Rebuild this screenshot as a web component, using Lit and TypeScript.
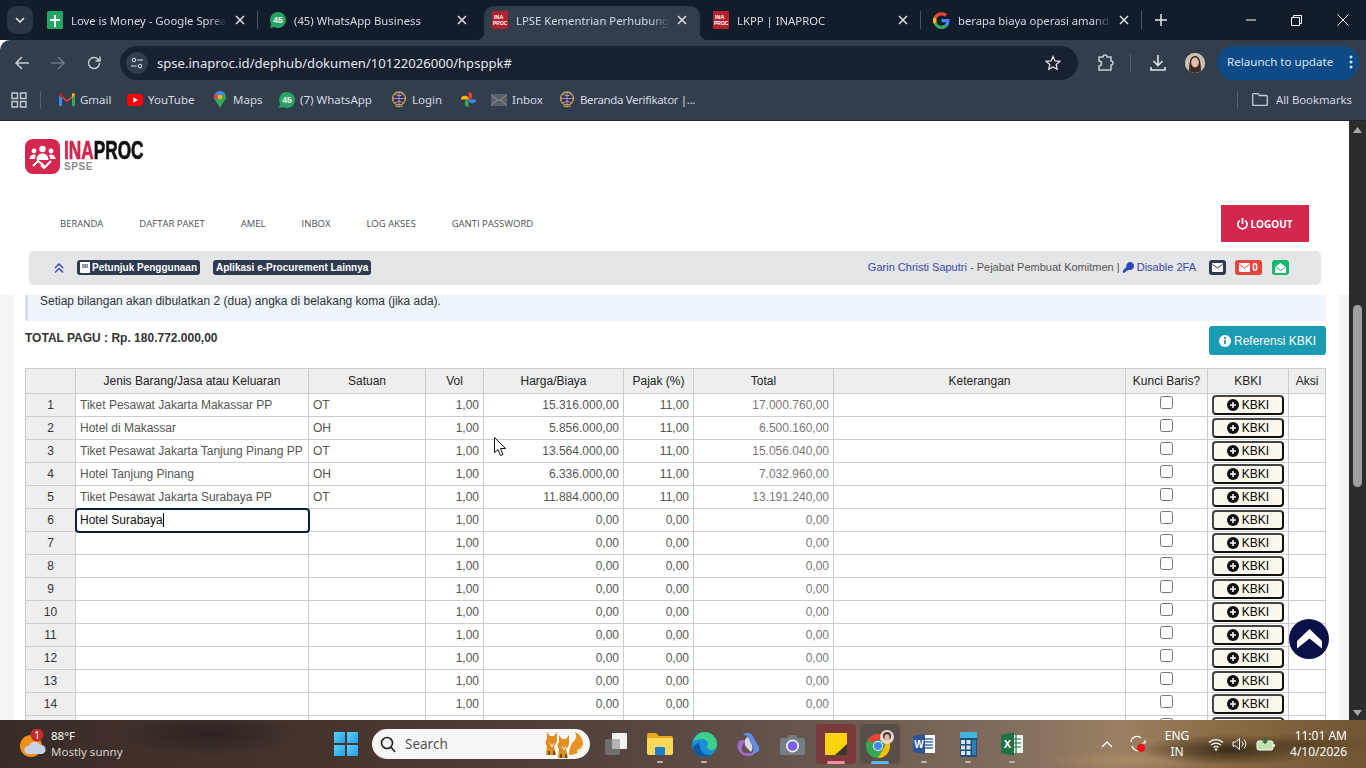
import { LitElement, html, css, svg } from 'lit';
import { customElement } from 'lit/decorators.js';
import { classMap } from 'lit/directives/class-map.js';

const sheetsIcon = html`<svg width="16" height="18" viewBox="0 0 16 18"><rect width="16" height="18" rx="1.500" fill="#23a566"/><path d="M7 4h2v4h4v2H9v6H7v-6H3V8h4z" fill="#fff"/></svg>`;
const waIcon = (label: string) => html`<svg width="16" height="16" viewBox="0 0 16 16"><path d="M8 0a8 8 0 0 1 0 16c-1.400 0-2.700-.4-3.800-1L0 16l1.100-4A8 8 0 0 1 8 0z" fill="#25a55f"/><text x="8" y="11" text-anchor="middle" font-size="8.500" font-weight="700" font-family="Liberation Sans" fill="#fff">${label}</text></svg>`;
const procIcon = html`<svg width="16" height="18" viewBox="0 0 16 18"><rect width="16" height="18" rx="1" fill="#b3202e"/><text x="2" y="8" font-size="5.500" font-weight="700" font-family="Liberation Sans" fill="#fff">INA</text><text x="1" y="14" font-size="5" font-weight="700" font-family="Liberation Sans" fill="#fff">PROC</text></svg>`;
const googleIcon = html`<svg width="17" height="17" viewBox="0 0 48 48"><path fill="#ea4335" d="M24 10c3.500 0 6.700 1.300 9.100 3.500l6.800-6.800A24 24 0 0 0 2.600 13.200l7.900 6.100C12.400 13.800 17.700 10 24 10z"/><path fill="#4285f4" d="M46.500 24.500c0-1.600-.1-3.100-.4-4.500H24v9h12.700c-.6 2.900-2.200 5.400-4.700 7l7.700 6c4.400-4.200 6.800-10.300 6.800-17.500z"/><path fill="#fbbc05" d="M10.500 28.700A14.500 14.500 0 0 1 10.500 19.300l-7.900-6.100a24 24 0 0 0 0 21.600z"/><path fill="#34a853" d="M24 48c6.500 0 11.900-2.100 15.700-5.800L32 36.200c-2.100 1.400-4.800 2.300-8 2.300-6.300 0-11.600-3.800-13.500-9.800l-7.900 6.100A24 24 0 0 0 24 48z"/></svg>`;
const closeX = html`<svg width="10" height="10" viewBox="0 0 10 10"><path d="M1 1l8 8M9 1l-8 8" stroke="#dfe3e8" stroke-width="1.500"/></svg>`;

const gmailIcon = html`<svg width="16" height="13" viewBox="0 0 16 13"><path d="M0 2v10a1 1 0 0 0 1 1h2V5z" fill="#4285f4"/><path d="M16 2v10a1 1 0 0 1-1 1h-2V5z" fill="#34a853"/><path d="M3 5v8h0L3 3 8 7l5-4v2L8 9z" fill="#ea4335"/><path d="M0 2c0-1.500 1.800-2.400 3-1.500V5z" fill="#c5221f"/><path d="M16 2c0-1.500-1.800-2.400-3-1.500V5z" fill="#fbbc05"/></svg>`;
const ytIcon = html`<svg width="16" height="12" viewBox="0 0 16 12"><rect width="16" height="12" rx="3" fill="#f00"/><path d="M6.300 3.300v5.400L11 6z" fill="#fff"/></svg>`;
const mapsIcon = html`<svg width="12" height="17" viewBox="0 0 12 17"><path d="M6 0a6 6 0 0 1 6 6c0 3-3.500 6-6 11-2.500-5-6-8-6-11a6 6 0 0 1 6-6z" fill="#34a853"/><path d="M6 0a6 6 0 0 1 5 2.700L2 9.500C.8 8.200 0 7 0 6a6 6 0 0 1 6-6z" fill="#4285f4"/><path d="M1.200 2.400 4.500 5 2 9C.8 8 0 7 0 6c0-1.400.4-2.600 1.200-3.600z" fill="#ea4335"/><circle cx="6" cy="6" r="2.200" fill="#fbbc05"/></svg>`;
const globeIcon = html`<svg width="16" height="17" viewBox="0 0 16 17"><circle cx="8" cy="7.500" r="6.500" fill="#3d3150" stroke="#c9a94b" stroke-width="1.300"/><path d="M2 7.500h12M8 1v13M4 3c2.500 2 5.500 2 8 0M4 12c2.500-2 5.500-2 8 0" stroke="#b9a6d8" stroke-width=".8" fill="none"/><path d="M4 14.500c2 1.800 6 1.800 8 0" stroke="#c9a94b" fill="none"/></svg>`;
const photosIcon = html`<svg width="15" height="15" viewBox="0 0 16 16"><path d="M8 8V0a4 4 0 0 1 0 8z" fill="#ea4335"/><path d="M8 8h8a4 4 0 0 1-8 0z" fill="#4285f4"/><path d="M8 8v8a4 4 0 0 1 0-8z" fill="#34a853"/><path d="M8 8H0a4 4 0 0 1 8 0z" fill="#fbbc05"/></svg>`;
const inboxIcon = html`<svg width="16" height="12" viewBox="0 0 16 12"><rect width="16" height="12" rx="1" fill="#5b6168"/><path d="M0 1l8 6 8-6M0 12l6-6M16 12l-6-6" stroke="#8a9097" fill="none"/></svg>`;

const bookmarks = [
  { label: 'Gmail', icon: gmailIcon, w: 68 },
  { label: 'YouTube', icon: ytIcon, w: 85 },
  { label: 'Maps', icon: mapsIcon, w: 67 },
  { label: '(7) WhatsApp', icon: waIcon('45'), w: 112 },
  { label: 'Login', icon: globeIcon, w: 69 },
  { label: '', icon: photosIcon, w: 31 },
  { label: 'Inbox', icon: inboxIcon, w: 68 },
  { label: 'Beranda Verifikator |...', icon: globeIcon, w: 150, tight: true },
];

const tabs = [
  { title: 'Love is Money - Google Spreadsheets', icon: sheetsIcon, w: 223, sep: true },
  { title: '(45) WhatsApp Business', icon: waIcon('45'), w: 222 },
  { title: 'LPSE Kementrian Perhubungan', icon: procIcon, w: 216, active: true },
  { title: 'LKPP | INAPROC', icon: procIcon, w: 225, inset: true, sep: true },
  { title: 'berapa biaya operasi amandel', icon: googleIcon, w: 221, sep: true },
];

const navLinks = ['Beranda', 'Daftar Paket', 'Amel', 'Inbox', 'Log Akses', 'Ganti Password'];

const filled = [
  ['Tiket Pesawat Jakarta Makassar PP', 'OT', '15.316.000,00', '11,00', '17.000.760,00'],
  ['Hotel di Makassar', 'OH', '5.856.000,00', '11,00', '6.500.160,00'],
  ['Tiket Pesawat Jakarta Tanjung Pinang PP', 'OT', '13.564.000,00', '11,00', '15.056.040,00'],
  ['Hotel Tanjung Pinang', 'OH', '6.336.000,00', '11,00', '7.032.960,00'],
  ['Tiket Pesawat Jakarta Surabaya PP', 'OT', '11.884.000,00', '11,00', '13.191.240,00'],
];

const columns = [50, 233, 117, 58, 140, 70, 140, 292, 82, 81, 37];
const headers = ['', 'Jenis Barang/Jasa atau Keluaran', 'Satuan', 'Vol', 'Harga/Biaya', 'Pajak (%)', 'Total', 'Keterangan', 'Kunci Baris?', 'KBKI', 'Aksi'];

const envelope = (fill: string, flap: string) => html`<svg width="11" height="9" viewBox="0 0 11 9"><rect width="11" height="9" rx="1" fill="${fill}"/><path d="M.5 1.500l5 3.500 5-3.500" stroke="${flap}" fill="none"/></svg>`;

const taskIcons = [
  { key: 'view', icon: html`<svg width="22" height="24" viewBox="0 0 22 24"><rect x="0" y="7" width="15" height="16" rx="2" fill="#6f6f6f"/><rect x="7" y="1" width="15" height="16" rx="1" fill="#f2f2f2"/><rect x="7" y="7" width="8" height="10" fill="#b4b4b4"/></svg>` },
  { key: 'files', dot: true, icon: html`<svg width="26" height="24" viewBox="0 0 26 24"><path d="M0 3a2 2 0 0 1 2-2h7l3 3h12a2 2 0 0 1 2 2v2H0z" fill="#e8a91c"/><rect y="6" width="26" height="17" rx="2" fill="#fdd75a"/><rect x="8" y="15" width="10" height="8" rx="1" fill="#1a7fd0"/></svg>` },
  { key: 'edge', dot: true, icon: html`<svg width="25" height="25" viewBox="0 0 25 25"><circle cx="12.500" cy="12.500" r="12.500" fill="#1b8fd8"/><path d="M1 10C3 3 8 0 13 0c6 0 12 5 12 12 0 4-3 6-6 6-2 0-4-1-4-3 0-1 1-2 1-3 0-3-3-5-6-5-4 0-8 2-9 3z" fill="#3bd18a"/><path d="M8 14c0 5 4 9 9 9 1 0 2 0 3-1-2 2-5 3-8 3-6 0-10-4-11-9 1-3 4-5 7-5-1 1-1 2 0 3z" fill="#0c5aa6"/></svg>` },
  { key: 'copilot', icon: html`<svg width="23" height="25" viewBox="0 0 23 25"><path d="M6 3c2-3 7-3 9 0l7 12c1 3-1 6-4 6h-3c2-3 2-6 0-9L11 5C9 3 7 3 6 3z" fill="#5f8fe8"/><path d="M2 9C0 12 0 16 2 19c2 4 6 5 10 5 3 0 5-1 6-3H9c-3 0-5-3-4-6l3-7c-3 0-5 0-6 1z" fill="#a06cd0"/><path d="M8 8c-1 3 0 6 2 8l4 4c2-3 2-6 0-9L11 5C10 5 9 6 8 8z" fill="#d8d8ec"/></svg>` },
  { key: 'camera', icon: html`<svg width="25" height="21" viewBox="0 0 25 21"><path d="M2 4h5l2-3h7l2 3h5a2 2 0 0 1 2 2v13a2 2 0 0 1-2 2H2a2 2 0 0 1-2-2V6a2 2 0 0 1 2-2z" fill="#757d85"/><circle cx="12.500" cy="12" r="6.500" fill="#eef0f4"/><circle cx="12.500" cy="12" r="4.800" fill="#7a5fe0"/></svg>` },
  { key: 'sticky', cls: 'sticky', icon: html`<svg width="22" height="22" viewBox="0 0 22 22"><path d="M0 0h22v13l-9 9H0z" fill="#fbd40c"/><path d="M22 11v11H10z" fill="#3a3a2e"/></svg>` },
  { key: 'chrome', cls: 'chrome', icon: html`<svg width="28" height="28" viewBox="0 0 28 28"><circle cx="12" cy="16" r="12" fill="#34a853"/><path d="M12 4a12 12 0 0 1 10.400 6H12a6 6 0 0 0-5.200 3L1.600 10A12 12 0 0 1 12 4z" fill="#ea4335"/><path d="M22.400 10A12 12 0 0 1 12 28l5.200-9a6 6 0 0 0 0-9z" fill="#fbbc05"/><circle cx="12" cy="16" r="5" fill="#fff"/><circle cx="12" cy="16" r="4" fill="#4285f4"/><circle cx="21" cy="7" r="7" fill="#e8d9cf"/><circle cx="21" cy="6" r="4" fill="#4a3530"/><ellipse cx="21" cy="7.500" rx="2.500" ry="3.200" fill="#e3b9a3"/></svg>` },
  { key: 'word', dot: true, icon: html`<svg width="22" height="20" viewBox="0 0 22 20"><rect x="7" y="1" width="15" height="18" fill="#fff"/><path d="M10 5h10M10 8h10M10 11h10M10 14h10" stroke="#3a6fb8" stroke-width="1.400"/><path d="M0 2l12-2v20L0 18z" fill="#2a5699"/><text x="6" y="13.500" font-size="10" font-weight="700" text-anchor="middle" font-family="Liberation Sans" fill="#fff">W</text></svg>` },
  { key: 'calc', dot: true, icon: html`<svg width="17" height="25" viewBox="0 0 17 25"><rect width="17" height="25" fill="#1d4f7c"/><rect width="17" height="6" fill="#41b3e0"/><path d="M1 8h4v4H1zM6.500 8h4v4h-4zM1 13.500h4v4H1zM6.500 13.500h4v4h-4zM1 19h4v4H1zM6.500 19h4v4h-4z" fill="#d9e4ea"/><path d="M12 8h4v15h-4z" fill="#2f7fb5"/></svg>` },
  { key: 'excel', dot: true, icon: html`<svg width="22" height="24" viewBox="0 0 22 24"><rect x="8" y="3" width="14" height="18" fill="#eaf3ec"/><path d="M11 7h9M11 11h9M11 15h9M15 3v18" stroke="#207245" stroke-width="1.200"/><path d="M0 3l13-3v24L0 21z" fill="#207245"/><text x="6.500" y="16" font-size="11" font-weight="700" text-anchor="middle" font-family="Liberation Sans" fill="#fff">X</text></svg>` },
];

const foxBody = svg`<path d="M6 2l3 4h4l3-4v8c0 3-2 5-3 6l2 9H5l1-9C4 14 4 11 6 9z" fill="#e08d22"/><path d="M8 12l3 3 3-3-3 6z" fill="#f9e8c8"/><path d="M7 25h2v-4H7zM12 25h2v-4h-2z" fill="#6b4a1c"/>`;

@customElement('app-root')
export class AppRoot extends LitElement {
  static styles = css`
    :host {
      display: flex;
      flex-direction: column;
      width: 1366px;
      height: 768px;
      overflow: hidden;
      position: relative;
      font-family: 'Liberation Sans', Arial, sans-serif;
      font-size: 12px;
      color: #333;
    }

    svg { display: block; flex: none; }

    /* browser chrome */
    .tabstrip {
      height: 40px;
      flex: none;
      background: #131c2a;
      display: flex;
      align-items: flex-start;
      padding-left: 7px;
      font-family: 'Noto Sans', sans-serif;
      color: #d5dae1;
    }
    .tab-menu {
      width: 26px;
      height: 28px;
      margin-top: 6px;
      margin-right: 6px;
      border-radius: 9px;
      background: #2b3544;
      display: flex;
      align-items: center;
      justify-content: center;
      flex: none;
    }
    .tab {
      height: 34px;
      margin-top: 6px;
      box-sizing: border-box;
      padding: 0 17px 6px 8px;
      display: flex;
      align-items: center;
      gap: 8px;
      flex: none;
      position: relative;
    }
    .tab.inset { padding-left: 13px; }
    .tab.active { background: #333e4d; border-radius: 10px 10px 0 0; padding-right: 13px; }
    .tab.active::before, .tab.active::after {
      content: '';
      position: absolute;
      bottom: 0;
      width: 8px;
      height: 8px;
    }
    .tab.active::before { left: -8px; background: radial-gradient(circle at 0 0, transparent 8px, #333e4d 8.500px); }
    .tab.active::after { right: -8px; background: radial-gradient(circle at 100% 0, transparent 8px, #333e4d 8.500px); }
    .tab-title {
      flex: 1;
      min-width: 0;
      white-space: nowrap;
      overflow: hidden;
      font-size: 11.300px;
      -webkit-mask-image: linear-gradient(to right, #000 88%, transparent);
      mask-image: linear-gradient(to right, #000 88%, transparent);
    }
    .tab-sep { width: 1px; height: 18px; margin: 11px 4px 0 -5px; background: #4a5462; flex: none; }
    .new-tab { margin: 14px 0 0 9px; flex: none; }
    .window-ctl { margin-left: auto; display: flex; align-items: center; height: 40px; padding-right: 17px; gap: 35px; }

    .toolbar {
      height: 45px;
      flex: none;
      background: #333e4d;
      display: flex;
      align-items: center;
      padding-left: 14px;
      border-radius: 10px 0 0 0;
      color: #d5dae1;
    }
    .tool { width: 16px; margin-right: 20px; flex: none; }
    .tool.last { margin-right: 18px; }
    .omnibox {
      width: 958px;
      height: 34px;
      border-radius: 17px;
      background: #172130;
      display: flex;
      align-items: center;
      padding: 0 17px 0 6px;
      box-sizing: border-box;
      flex: none;
    }
    .site-btn {
      width: 22px;
      height: 22px;
      border-radius: 50%;
      background: #333e4d;
      display: flex;
      align-items: center;
      justify-content: center;
      margin-right: 9px;
      flex: none;
    }
    .url { font-family: 'Noto Sans', sans-serif; font-size: 13.100px; flex: 1; color: #e3e7ec; }
    .toolbar-right { display: flex; align-items: center; margin-left: 18px; }
    .tb-divider { width: 1px; height: 18px; background: #56606d; margin: 0 19px 0 16px; }
    .avatar {
      width: 20px;
      height: 20px;
      border-radius: 50%;
      background: #c9b9ab;
      margin: 0 12px 0 19px;
      overflow: hidden;
    }
    .relaunch {
      width: 142px;
      height: 34px;
      border-radius: 17px;
      background: #0e4a86;
      color: #d6e6f7;
      font-family: 'Noto Sans', sans-serif;
      font-size: 11.600px;
      white-space: nowrap;
      display: flex;
      align-items: center;
      padding: 0 0 2px 10px;
      box-sizing: border-box;
      justify-content: space-between;
    }
    .relaunch svg { margin-right: 1px; }

    .bookmarks {
      height: 36px;
      flex: none;
      background: #333e4d;
      display: flex;
      align-items: center;
      padding: 0 0 6px 11px;
      font-family: 'Noto Sans', sans-serif;
      font-size: 11.500px;
      color: #d5dae1;
      border-bottom: 1px solid #1e2632;
      box-sizing: border-box;
    }
    .bm-divider { width: 1px; height: 18px; background: #56606d; margin: 0 9px 0 13px; flex: none; }
    .bm { display: flex; align-items: center; gap: 5px; flex: none; box-sizing: border-box; padding-left: 9px; white-space: nowrap; }
    .bm.tight { letter-spacing: -.35px; }
    .bm-icon { width: 16px; display: flex; justify-content: center; flex: none; }
    .all-bm { margin-left: auto; display: flex; align-items: center; gap: 8px; padding-right: 14px; border-left: 1px solid #56606d; padding-left: 14px; height: 18px; font-size: 11.300px; }

    /* page */
    .page { flex: 1; min-height: 0; display: flex; background: #fff; }
    .main { flex: 1; min-width: 0; display: flex; flex-direction: column; }
    .scrollbar {
      width: 17px;
      flex: none;
      background: #2c2c2c;
      display: flex;
      flex-direction: column;
      align-items: center;
      padding-top: 6px;
      box-sizing: border-box;
    }
    .thumb { width: 9px; height: 182px; border-radius: 5px; background: #9f9f9f; margin-top: 172px; }
    .scroll-arrow { flex: none; }
    .scroll-arrow.down { margin-top: auto; margin-bottom: 4px; }

    header { flex: none; height: 174px; background: #fff; display: flex; flex-direction: column; }
    .logo-row { height: 84px; box-sizing: border-box; padding: 18px 0 0 25px; display: flex; gap: 4px; align-items: flex-start; }
    .logo-text { line-height: 1; padding-top: 2px; }
    .logo-name {
      font-weight: 700;
      font-size: 25px;
      line-height: 19px;
      color: #111;
      white-space: nowrap;
      transform: scaleX(.69);
      transform-origin: left center;
      -webkit-text-stroke: .7px currentColor;
    }
    .logo-name span { color: #d3274f; }
    .logo-sub { font-weight: 700; font-size: 10px; color: #8c8c8c; line-height: 9px; letter-spacing: .6px; margin-top: 2px; }
    .nav-row { height: 37px; display: flex; align-items: center; padding: 0 40px 0 60px; gap: 36px; }
    .nav-link { font-family: 'Open Sans', sans-serif; font-size: 9.500px; text-transform: uppercase; color: #4b4f56; padding-bottom: 1px; }
    .logout {
      margin-left: auto;
      width: 88px;
      height: 37px;
      background: #d3274f;
      color: #fff;
      display: flex;
      align-items: center;
      justify-content: center;
      gap: 2px;
      font-family: 'Open Sans', sans-serif;
      font-weight: 700;
      font-size: 10px;
    }
    .infobar {
      height: 34px;
      margin: 9px 28px 10px 29px;
      background: #e4e5e6;
      border-radius: 5px;
      display: flex;
      align-items: center;
      padding: 0 32px 1px 25px;
      box-sizing: border-box;
      font-size: 11px;
    }
    .label {
      background: #2f3a50;
      color: #fff;
      font-weight: 700;
      font-size: 10px;
      height: 15px;
      border-radius: 3px;
      display: flex;
      align-items: center;
      gap: 2px;
      padding: 0 3px;
      margin-right: 13px;
      white-space: nowrap;
    }
    .chevrons { margin-right: 13px; }
    .user { margin-left: auto; color: #555; display: flex; align-items: center; white-space: pre; line-height: 13px; }
    .user b { font-weight: 400; color: #3949ab; }
    .mini { height: 15px; border-radius: 3px; display: flex; align-items: center; justify-content: center; gap: 2px; color: #fff; font-weight: 700; font-size: 10px; }
    .mini.dark { background: #2f3a50; width: 17px; margin-left: 13px; }
    .mini.red { background: #e5453c; width: 27px; margin-left: 9px; }
    .mini.green { background: #12b76a; width: 17px; margin-left: 10px; }

    .content { flex: 1; min-height: 0; background: #f4f4f4; padding: 0 10px 0 14px; overflow: hidden; }
    .card { background: #fff; padding: 0 13px 0 11px; height: 100%; }
    .alert {
      height: 26px;
      box-sizing: border-box;
      background: #eef4fb;
      border-left: 3px solid #cfdeec;
      border-radius: 0 0 0 3px;
      padding-left: 12px;
      line-height: 13px;
    }
    .total-row { display: flex; justify-content: space-between; align-items: flex-start; margin: 5px 0 13px; }
    .total { font-weight: 700; color: #333; padding-top: 5px; }
    .ref-btn {
      height: 29px;
      width: 117px;
      box-sizing: border-box;
      background: #1a9bb2;
      color: #fff;
      border-radius: 3px;
      display: flex;
      align-items: center;
      justify-content: center;
      gap: 3px;
    }

    table { border-collapse: collapse; table-layout: fixed; width: 1300px; color: #555; }
    th, td { border: 1px solid #ccc; padding: 0 4px; height: 23px; box-sizing: border-box; white-space: nowrap; overflow: hidden; }
    th { height: 25px; background: #eee; font-weight: 400; color: #222; text-align: center; }
    td.idx { background: #eee; text-align: center; color: #333; }
    td.num { text-align: right; }
    td.muted { color: #777; }
    td.center { text-align: center; padding: 0; }
    td.editing {
      outline: 2px solid #0d2238;
      outline-offset: -1px;
      border-radius: 3px;
      color: #111;
      position: relative;
    }
    .caret { border-right: 1px solid #000; }
    input[type='checkbox'] { margin: 0 0 6px; width: 13px; height: 13px; vertical-align: middle; }
    .kbki {
      height: 20px;
      width: 72px;
      margin-left: 4px;
      box-sizing: border-box;
      border: 2px solid #111;
      border-top-color: #444;
      border-left-color: #444;
      border-radius: 4px;
      background: #fdf8ee;
      color: #000;
      display: flex;
      align-items: center;
      justify-content: center;
      gap: 3px;
    }

    .to-top {
      position: absolute;
      left: 1289px;
      top: 619px;
      width: 40px;
      height: 40px;
      border-radius: 50%;
      background: #0c1049;
      display: flex;
      align-items: center;
      justify-content: center;
    }
    .cursor { position: absolute; left: 494px; top: 437px; }

    /* taskbar */
    .taskbar {
      height: 48px;
      flex: none;
      display: flex;
      align-items: center;
      color: #fff;
      font-family: 'Noto Sans', sans-serif;
      background:
        radial-gradient(ellipse 90px 22px at 210px 14px, #2c2321, transparent),
        radial-gradient(ellipse 90px 16px at 1230px 30px, #3a2c18, transparent),
        radial-gradient(ellipse 60px 12px at 1310px 24px, #5b4423, transparent),
        radial-gradient(ellipse 80px 10px at 1130px 40px, #a88a62, transparent),
        linear-gradient(to right, #3a2c27 0%, #46352e 25%, #55443d 45%, #6b5a50 62%, #7d6a5c 72%, #9a8063 82%, #8a6a42 90%, #6e5634 100%);
    }
    .weather { width: 334px; flex: none; display: flex; align-items: center; gap: 5px; padding-left: 20px; box-sizing: border-box; font-size: 11.500px; line-height: 16px; }
    .weather-sub { color: #d8d4d0; }
    .win { flex: none; display: grid; grid-template-columns: 11px 11px; gap: 2px; }
    .win i { height: 11px; background: linear-gradient(135deg, #5fd0fb, #1f9fe8); display: block; }
    .search {
      width: 218px;
      height: 30px;
      margin: 0 4px 0 14px;
      border-radius: 15px;
      background: #f6f6f6;
      display: flex;
      align-items: center;
      gap: 9px;
      padding: 0 5px 0 8px;
      box-sizing: border-box;
      color: #555;
      font-size: 13.500px;
      flex: none;
    }
    .search span { flex: 1; }
    .task-icon {
      width: 44px;
      height: 40px;
      box-sizing: border-box;
      display: flex;
      align-items: center;
      justify-content: center;
      flex: none;
      position: relative;
    }
    .task-icon.dot::after { content: ''; position: absolute; bottom: 1px; width: 6px; height: 2px; background: #b9b4b0; border-radius: 1px; }
    .task-icon.sticky { background: #7a3a3c; border-radius: 4px; margin: 0 2px; width: 40px; }
    .task-icon.chrome { background: #5a4e4a; border-radius: 4px; margin: 0 2px; width: 40px; }
    .task-icon.sticky::after, .task-icon.chrome::after { content: ''; position: absolute; bottom: 0; width: 18px; height: 3px; border-radius: 2px; }
    .task-icon.sticky::after { background: #f58ea0; }
    .task-icon.chrome::after { background: #5cb8f0; }
    .tray { margin-left: auto; display: flex; align-items: center; padding-right: 19px; font-size: 12px; }
    .tray-sync { margin-left: 17px; }
    .tray-gap { margin-left: 8px; }
    .lang { width: 30px; text-align: center; line-height: 16px; margin: 0 16px; }
    .clock { text-align: right; line-height: 16px; margin-left: 14px; }
  `;

  private renderTabs() {
    return tabs.map(t => html`
      <div
        class=${classMap({ tab: true, active: !!t.active, inset: !!t.inset })}
        style="width:${t.w}px"
      >
        ${t.icon}
        <div class="tab-title">${t.title}</div>
        ${closeX}
      </div>
      ${t.sep ? html`<div class="tab-sep"></div>` : ''}
    `);
  }

  private renderChrome() {
    return html`
      <div class="tabstrip">
        <div class="tab-menu"><svg width="10" height="6" viewBox="0 0 10 6"><path d="M1 1l4 4 4-4" stroke="#e3e7ec" stroke-width="1.600" fill="none"/></svg></div>
        ${this.renderTabs()}
        <svg class="new-tab" width="12" height="12" viewBox="0 0 12 12"><path d="M6 0v12M0 6h12" stroke="#e3e7ec" stroke-width="1.500"/></svg>
        <div class="window-ctl">
          <svg width="10" height="10" viewBox="0 0 10 10"><path d="M0 5h10" stroke="#fff"/></svg>
          <svg width="11" height="11" viewBox="0 0 11 11"><path d="M.5 2.500h8v8h-8zM2.500 2.500v-2h8v8h-2" stroke="#fff" fill="none"/></svg>
          <svg width="12" height="12" viewBox="0 0 12 12"><path d="M.5.500l11 11M11.500.500l-11 11" stroke="#fff"/></svg>
        </div>
      </div>
      <div class="toolbar">
        <svg class="tool" viewBox="0 0 16 16"><path d="M15 8H2M8 2L2 8l6 6" stroke="#c7ccd3" stroke-width="1.600" fill="none"/></svg>
        <svg class="tool" viewBox="0 0 16 16"><path d="M1 8h13M8 2l6 6-6 6" stroke="#6b7480" stroke-width="1.600" fill="none"/></svg>
        <svg class="tool last" viewBox="0 0 16 16"><path d="M13.500 8a5.500 5.500 0 1 1-1.600-3.900L14 6M14 1.500V6H9.500" stroke="#c7ccd3" stroke-width="1.500" fill="none"/></svg>
        <div class="omnibox">
          <div class="site-btn"><svg width="12" height="12" viewBox="0 0 12 12"><circle cx="3" cy="3" r="1.800" stroke="#dfe3e8" fill="none"/><circle cx="9" cy="9" r="1.800" stroke="#dfe3e8" fill="none"/><path d="M6.500 3H12M0 9h5.500" stroke="#dfe3e8"/></svg></div>
          <div class="url">spse.inaproc.id/dephub/dokumen/10122026000/hpsppk#</div>
          <svg width="16" height="16" viewBox="0 0 16 16"><path d="M8 1.500l2 4.400 4.800.5-3.600 3.200 1 4.700L8 11.900l-4.200 2.400 1-4.700L1.200 6.400 6 5.900z" stroke="#dfe3e8" stroke-width="1.300" fill="none"/></svg>
        </div>
        <div class="toolbar-right">
          <svg width="18" height="18" viewBox="0 0 18 18"><path d="M3 3h4a2 2 0 0 1 4 0h4v4a2 2 0 0 1 0 4v5H3v-4a2 2 0 0 0 0-5z" stroke="#c7ccd3" stroke-width="1.500" fill="none"/></svg>
          <div class="tb-divider"></div>
          <svg width="16" height="17" viewBox="0 0 16 17"><path d="M8 1v10M3.500 7L8 11.500 12.500 7M1 13v3h14v-3" stroke="#dfe3e8" stroke-width="1.600" fill="none"/></svg>
          <div class="avatar"><svg width="20" height="20" viewBox="0 0 20 20"><rect width="20" height="20" fill="#cdbfb2"/><path d="M4 20c0-14 2-17 6-17s6 3 6 17z" fill="#3c2a24"/><ellipse cx="10" cy="9.500" rx="3.800" ry="5" fill="#e4bfa8"/></svg></div>
          <div class="relaunch">
            <span>Relaunch to update</span>
            <svg width="14" height="16" viewBox="0 0 14 16"><circle cx="7" cy="3" r="1.500" fill="#cfe0f3"/><circle cx="7" cy="8" r="1.500" fill="#cfe0f3"/><circle cx="7" cy="13" r="1.500" fill="#cfe0f3"/></svg>
          </div>
        </div>
      </div>
      <div class="bookmarks">
        <svg width="16" height="16" viewBox="0 0 16 16"><path d="M1 1h5.500v5.500H1zM9.500 1H15v5.500H9.500zM1 9.500h5.500V15H1zM9.500 9.500H15V15H9.500z" stroke="#c7ccd3" stroke-width="1.400" fill="none"/></svg>
        <div class="bm-divider"></div>
        ${bookmarks.map(b => html`
          <div class=${classMap({ bm: true, tight: !!b.tight })} style="width:${b.w}px"><span class="bm-icon">${b.icon}</span>${b.label}</div>
        `)}
        <div class="all-bm">
          <svg width="16" height="13" viewBox="0 0 16 13"><path d="M.7 2V11.500a1 1 0 0 0 1 1h12.600a1 1 0 0 0 1-1V3.500a1 1 0 0 0-1-1H7.500L6 .700H1.700a1 1 0 0 0-1 1z" stroke="#c7ccd3" stroke-width="1.300" fill="none"/></svg>
          All Bookmarks
        </div>
      </div>
    `;
  }

  private renderHeader() {
    return html`
      <header>
        <div class="logo-row">
          <svg width="35" height="35" viewBox="0 0 35 35">
            <rect width="35" height="35" rx="8" fill="#d3274f"/>
            <circle cx="17.500" cy="10" r="3.200" fill="#fff"/>
            <circle cx="9" cy="12" r="2.400" fill="#fff"/>
            <circle cx="26" cy="12" r="2.400" fill="#fff"/>
            <path d="M11.500 21c0-4 2.500-6.500 6-6.500s6 2.500 6 6.500zM4.500 20c0-3 2-4.500 4.500-4.500l2 .5-1.500 4zM30.500 20c0-3-2-4.500-4.500-4.500l-2 .5 1.500 4z" fill="#fff"/>
            <path d="M8 27l5-5 4 3 2 2" stroke="#fff" stroke-width="2" fill="none"/>
            <path d="M16 26l3 3 7-7" stroke="#fff" stroke-width="2.200" fill="none"/>
          </svg>
          <div class="logo-text">
            <div class="logo-name"><span>INA</span>PROC</div>
            <div class="logo-sub">SPSE</div>
          </div>
        </div>
        <div class="nav-row">
          ${navLinks.map(l => html`<span class="nav-link">${l}</span>`)}
          <div class="logout">
            <svg width="11" height="12" viewBox="0 0 11 12"><path d="M5.500 0v6" stroke="#fff" stroke-width="1.800"/><path d="M2.800 2.500a4.600 4.600 0 1 0 5.400 0" stroke="#fff" stroke-width="1.700" fill="none"/></svg>
            LOGOUT
          </div>
        </div>
        <div class="infobar">
          <svg class="chevrons" width="10" height="10" viewBox="0 0 10 10"><path d="M1 5l4-4 4 4M1 9.500l4-4 4 4" stroke="#3f51b5" stroke-width="1.500" fill="none"/></svg>
          <div class="label">
            <svg width="10" height="11" viewBox="0 0 10 11"><path d="M1 0h9v11H1a1 1 0 0 1-1-1V1a1 1 0 0 1 1-1z" fill="#fff"/><path d="M2 3h6M2 5h6" stroke="#2f3a50"/></svg>
            Petunjuk Penggunaan
          </div>
          <div class="label">Aplikasi e-Procurement Lainnya</div>
          <div class="user">
            <b>Garin Christi Saputri</b> - Pejabat Pembuat Komitmen | <svg width="11" height="11" viewBox="0 0 11 11"><path d="M7 0a4 4 0 1 1-1.500 7.700L4.500 8.700H3v1.300H1.500V11H0V8.500l3.400-3.400A4 4 0 0 1 7 0z" fill="#2c48b8"/></svg><b> Disable 2FA</b>
            <div class="mini dark">${envelope('#fff', '#2f3a50')}</div>
            <div class="mini red">${envelope('#fff', '#e5453c')}0</div>
            <div class="mini green"><svg width="11" height="10" viewBox="0 0 11 10"><path d="M0 4l5.500-4L11 4v6H0z" fill="#fff"/><path d="M.5 4l5 3.500 5-3.500" stroke="#12b76a" fill="none"/></svg></div>
          </div>
        </div>
      </header>
    `;
  }

  private renderRow(i: number) {
    const row = filled[i];
    const empty = !row;
    return html`
      <tr>
        <td class="idx">${i + 1}</td>
        ${i === 5
          ? html`<td class="editing"><span class="caret">Hotel Surabaya</span></td>`
          : html`<td>${row ? row[0] : ''}</td>`}
        <td>${row ? row[1] : ''}</td>
        <td class="num">1,00</td>
        <td class="num">${empty ? '0,00' : row[2]}</td>
        <td class="num">${empty ? '0,00' : row[3]}</td>
        <td class="num muted">${empty ? '0,00' : row[4]}</td>
        <td></td>
        <td class="center"><input type="checkbox" /></td>
        <td class="center">
          <div class="kbki">
            <svg width="12" height="12" viewBox="0 0 12 12"><circle cx="6" cy="6" r="6" fill="#111"/><path d="M6 3v6M3 6h6" stroke="#fff" stroke-width="1.500"/></svg>
            KBKI
          </div>
        </td>
        <td></td>
      </tr>
    `;
  }

  private renderContent() {
    return html`
      <div class="content">
        <div class="card">
          <div class="alert">Setiap bilangan akan dibulatkan 2 (dua) angka di belakang koma (jika ada).</div>
          <div class="total-row">
            <div class="total">TOTAL PAGU : Rp. 180.772.000,00</div>
            <div class="ref-btn">
              <svg width="12" height="12" viewBox="0 0 12 12"><circle cx="6" cy="6" r="6" fill="#fff"/><path d="M6 5v4" stroke="#1a9bb2" stroke-width="1.800"/><circle cx="6" cy="3.200" r="1.100" fill="#1a9bb2"/></svg>
              Referensi KBKI
            </div>
          </div>
          <table>
            <colgroup>${columns.map(w => html`<col style="width:${w}px" />`)}</colgroup>
            <thead><tr>${headers.map(h => html`<th>${h}</th>`)}</tr></thead>
            <tbody>${Array.from({ length: 18 }, (_, i) => this.renderRow(i))}</tbody>
          </table>
        </div>
      </div>
    `;
  }

  private renderTaskbar() {
    return html`
      <div class="taskbar">
        <div class="weather">
          <svg width="26" height="30" viewBox="0 0 26 30">
            <circle cx="11" cy="17" r="11" fill="#ef8f1d"/>
            <path d="M8 25a4 4 0 0 1 1-8 6 6 0 0 1 11-1 4.500 4.500 0 0 1 2 9z" fill="#c9d3e6"/>
            <circle cx="17" cy="6" r="6.500" fill="#c42b2b"/>
            <text x="17" y="9.500" text-anchor="middle" font-size="10" font-family="Noto Sans" fill="#fff">1</text>
          </svg>
          <div><div>88°F</div><div class="weather-sub">Mostly sunny</div></div>
        </div>
        <div class="win"><i></i><i></i><i></i><i></i></div>
        <div class="search">
          <svg width="16" height="17" viewBox="0 0 16 17"><circle cx="7" cy="7" r="5.500" stroke="#222" stroke-width="1.600" fill="none"/><path d="M11 11l4 5" stroke="#222" stroke-width="1.600"/></svg>
          <span>Search</span>
          <svg width="44" height="28" viewBox="0 0 44 28">
            <g>${foxBody}</g>
            <g transform="translate(12 3)">${foxBody}</g>
            <path d="M28 25c8 0 14-4 14-11 0-5-3-10-8-12 2 4 1 7-1 9-3 3-5 8-5 14z" fill="#e79326"/>
            <path d="M36 20c3-1 5-3 6-6 0 5-2 8-6 9z" fill="#f7e3c0"/>
          </svg>
        </div>
        ${taskIcons.map(t => html`
          <div class=${classMap({ 'task-icon': true, dot: !!t.dot, [t.cls ?? 'plain']: true })}>${t.icon}</div>
        `)}
        <div class="tray">
          <svg width="12" height="7" viewBox="0 0 12 7"><path d="M1 6l5-5 5 5" stroke="#fff" stroke-width="1.300" fill="none"/></svg>
          <svg class="tray-sync" width="16" height="18" viewBox="0 0 16 18"><path d="M1 7a6 6 0 0 1 10-4M15 5v3h-3M2 11c1 4 6 6 9 4" stroke="#fff" stroke-width="1.200" fill="none"/><circle cx="11" cy="13" r="4" fill="#e8141c"/></svg>
          <div class="lang"><div>ENG</div><div>IN</div></div>
          <svg width="16" height="13" viewBox="0 0 16 13"><path d="M1 4.500a10 10 0 0 1 14 0M3.200 7a7 7 0 0 1 9.600 0M5.500 9.400a4 4 0 0 1 5 0" stroke="#fff" stroke-width="1.300" fill="none"/><circle cx="8" cy="11.500" r="1.300" fill="#fff"/></svg>
          <svg class="tray-gap" width="16" height="14" viewBox="0 0 16 14"><path d="M1 5h2.500L7.500 1.500v11L3.500 9H1z" stroke="#fff" fill="none"/><path d="M10 4.500a3.500 3.500 0 0 1 0 5M12 2.500a6.500 6.500 0 0 1 0 9" stroke="#fff" fill="none"/></svg>
          <svg class="tray-gap" width="20" height="14" viewBox="0 0 20 14"><rect x="1" y="4" width="16" height="9" rx="2" fill="#bfe0a8" stroke="#fff"/><path d="M18 7v3" stroke="#fff" stroke-width="1.500"/><path d="M9 0v6M6.500 3.500L9 6l2.500-2.500" stroke="#1f5f3a" stroke-width="1.400" fill="none"/></svg>
          <div class="clock"><div>11:01 AM</div><div>4/10/2026</div></div>
        </div>
      </div>
    `;
  }

  render() {
    return html`
      ${this.renderChrome()}
      <div class="page">
        <div class="main">
          ${this.renderHeader()}
          ${this.renderContent()}
        </div>
        <div class="scrollbar">
          <svg class="scroll-arrow" width="9" height="6" viewBox="0 0 9 6"><path d="M4.500 0L9 6H0z" fill="#a8a8a8"/></svg>
          <div class="thumb"></div>
          <svg class="scroll-arrow down" width="9" height="6" viewBox="0 0 9 6"><path d="M4.500 6L9 0H0z" fill="#a8a8a8"/></svg>
        </div>
      </div>
      ${this.renderTaskbar()}
      <div class="to-top">
        <svg width="25" height="20" viewBox="0 0 25 20"><path d="M12.500 0L25 12v7.500L12.500 9.500 0 19.500V12z" fill="#fff"/></svg>
      </div>
      <svg class="cursor" width="13" height="20" viewBox="0 0 13 20"><path d="M.5.500v15l3.500-3 2.500 6 2.500-1-2.500-6h5z" fill="#fff" stroke="#111"/></svg>
    `;
  }
}
